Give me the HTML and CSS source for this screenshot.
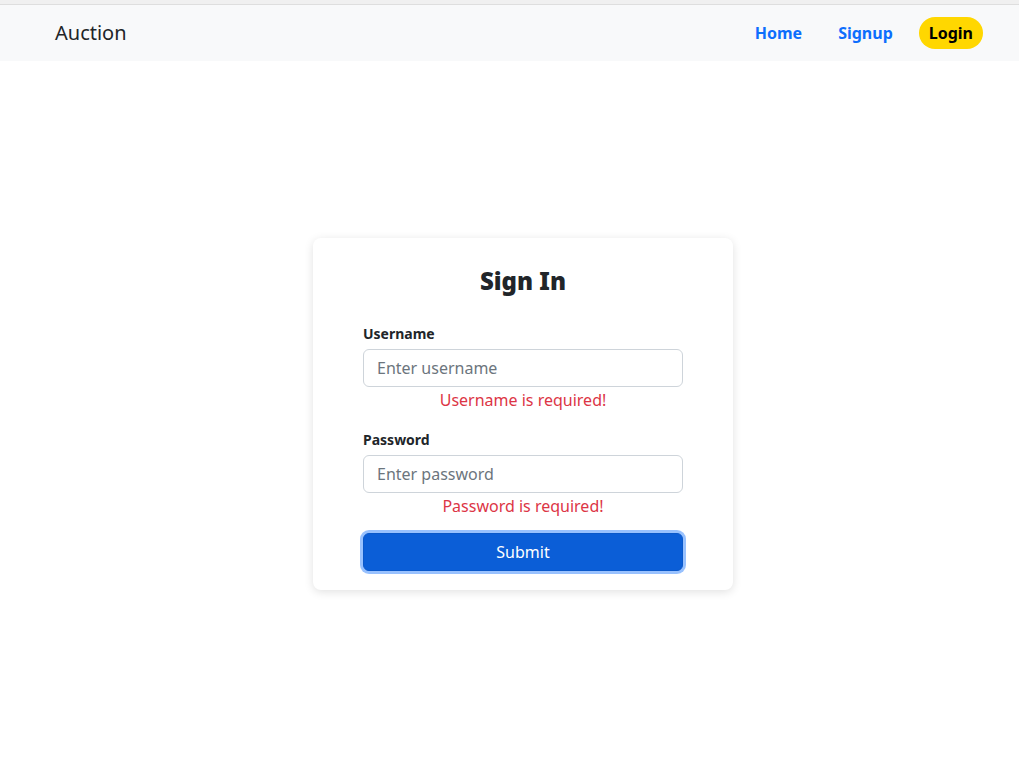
FILE: index.html
```html
<!DOCTYPE html>
<html lang="en">
<head>
<meta charset="utf-8">
<title>Auction - Sign In</title>
<link rel="stylesheet" href="styles.css">
</head>
<body>
<div class="topstrip"></div>
<nav class="navbar">
  <a class="brand" href="#">Auction</a>
  <div class="nav-links">
    <a class="nav-link" href="#">Home</a>
    <a class="nav-link" href="#">Signup</a>
    <a class="nav-link active" href="#">Login</a>
  </div>
</nav>
<main class="main">
  <div class="card">
    <h2 class="title">Sign In</h2>
    <form class="form">
      <div class="group">
        <label class="label" for="u">Username</label>
        <input class="input" id="u" type="text" placeholder="Enter username">
        <div class="error">Username is required!</div>
      </div>
      <div class="group">
        <label class="label" for="p">Password</label>
        <input class="input" id="p" type="password" placeholder="Enter password">
        <div class="error">Password is required!</div>
      </div>
      <button class="submit" type="button">Submit</button>
    </form>
  </div>
</main>
</body>
</html>
```
FILE: styles.css
```css
* { box-sizing: border-box; }
html, body { margin: 0; padding: 0; }
body {
  font-family: "Noto Sans", "Open Sans", sans-serif;
  color: #212529;
  background: #fff;
  font-size: 16px;
  line-height: 1.5;
}
.topstrip {
  height: 5px;
  background: #f0f0f0;
  border-bottom: 1px solid #dedede;
}
.navbar {
  height: 56px;
  background: #f8f9fa;
  display: flex;
  align-items: center;
  justify-content: space-between;
  padding: 0 36px 0 55px;
}
.brand {
  font-size: 20px;
  color: #212529;
  text-decoration: none;
  line-height: 30px;
}
.nav-links {
  display: flex;
  align-items: center;
  gap: 16px;
}
.nav-link {
  font-weight: 700;
  color: #0d6efd;
  text-decoration: none;
  padding: 4px 10px;
  line-height: 24px;
  border-radius: 16px;
}
.nav-link.active {
  background: #ffd700;
  color: #000;
}
.main {
  height: calc(100vh - 61px);
  display: flex;
  align-items: center;
  justify-content: center;
  padding-left: 27px;
}
.card {
  width: 420px;
  background: #fff;
  border-radius: 8px;
  box-shadow: 0 2px 10px rgba(0, 0, 0, 0.12);
  padding: 28px 50px 19px;
}
.title {
  margin: 0 0 28px;
  text-align: center;
  font-size: 24px;
  font-weight: 900;
  line-height: 29px;
}
.form { display: flex; flex-direction: column; }
.group { display: flex; flex-direction: column; margin-bottom: 17px; }
.label {
  font-size: 14px;
  font-weight: 700;
  line-height: 21px;
  margin-bottom: 5px;
}
.input {
  height: 38px;
  border: 1px solid #ced4da;
  border-radius: 6px;
  padding: 6px 13px;
  font-family: inherit;
  font-size: 16px;
  color: #212529;
  outline: none;
}
.input::placeholder { color: #6c757d; }
.error {
  color: #dc3545;
  text-align: center;
  line-height: 24px;
  margin-top: 1px;
}
.group + .group { margin-bottom: 15px; }
.submit {
  height: 38px;
  background: #0b5ed7;
  color: #fff;
  border: 1px solid #0a58ca;
  border-radius: 6px;
  font-family: inherit;
  font-size: 16px;
  box-shadow: 0 0 0 3px rgba(49, 132, 253, 0.5);
}
```
